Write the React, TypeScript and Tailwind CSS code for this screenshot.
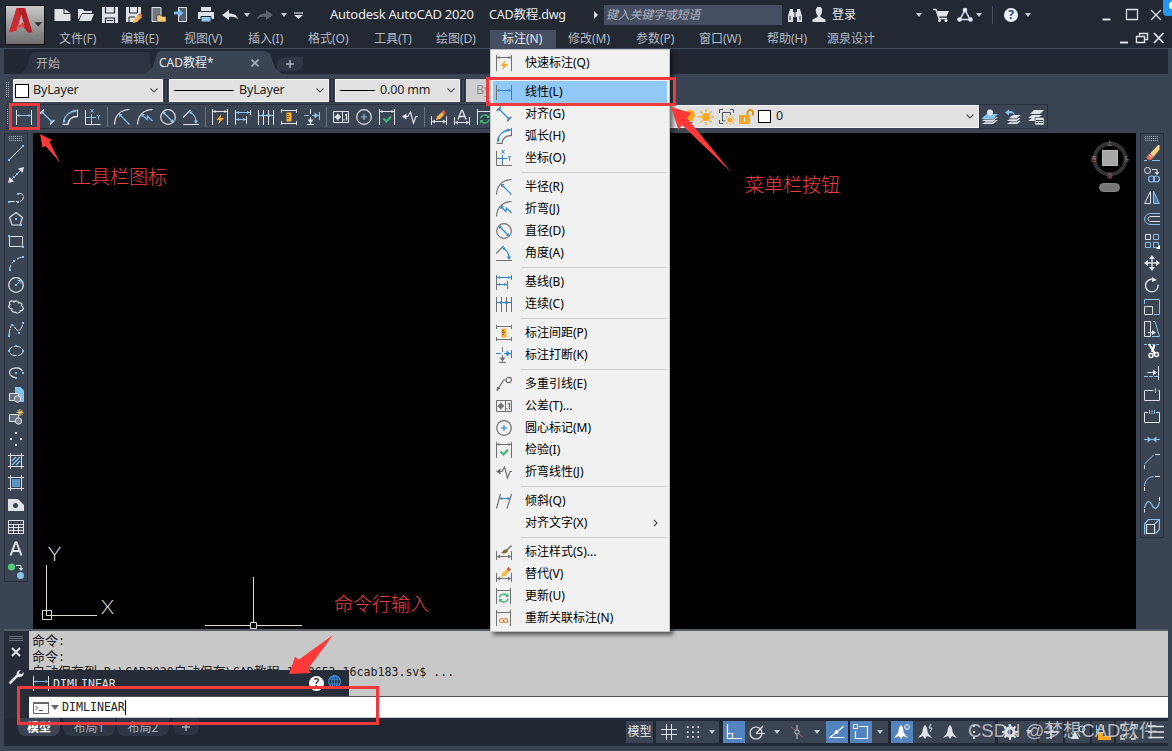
import type { ReactNode } from 'react';

type Draw = (m: string, a: string) => ReactNode;

const BLUE = '#86c2ee';
const LIGHT = '#dfe3e8';

/* Shared dimension glyphs. m = main stroke, a = accent stroke. */
const dim: Record<string, Draw> = {
  quick: (m) => (
    <>
      <path d="M.5 0v16M15.500 0v16M1 2.500h14" stroke={m} />
      <path d="M3.500 1v3L1 2.500zM12.500 1v3L15 2.500z" fill={m} />
      <path d="M9.500 5 4.500 11h3L6 15.500l6-6.500H8.500z" fill="#f9a72b" />
    </>
  ),
  linear: (m, a) => (
    <>
      <path d="M.5 1v15M15.500 1v15" stroke={m} />
      <path d="M1 6.500h14" stroke={a} />
      <path d="M1 6.500 3.500 5v3zM15 6.500 12.500 5v3z" fill={a} />
    </>
  ),
  aligned: (m, a) => (
    <>
      <path d="M.5 5 5 .5M11 15.500l4.500-4.500" stroke={m} strokeWidth="1.200" />
      <path d="m3 3 10 10" stroke={a} strokeWidth="1.3" />
      <path d="M2.500 2.500h3l-3 3zM13.500 13.500h-3l3-3z" fill={a} />
    </>
  ),
  arc: (m, a) => (
    <>
      <path d="M.5 15.500H6C6.500 10 10 7.500 15.500 7.500" stroke={m} strokeWidth="1.300" />
      <path d="M15.500 0v8" stroke={m} />
      <path d="M1.500 13C2.500 7 7 2.500 14 2" stroke={a} strokeWidth="1.300" />
      <path d="m1 14.500.5-4 2.500 1.500zM15.500 1.500l-4-1v3z" fill={a} />
    </>
  ),
  ordinate: (m, a) => (
    <>
      <path d="M.5 1v14.500H16M6.500 5v10.500" stroke={m} />
      <path d="M1 8.500h10M6.500 5v7M5.500 0l3 3.500M8.500 0l-3 3.500M12 6l1.500 2L15 6M13.500 8v2.500" stroke={a} />
    </>
  ),
  radius: (m, a) => (
    <>
      <path d="M.5 15.500C1 7 6 1 15.500.5" stroke={m} strokeWidth="1.200" />
      <path d="m6 6 9.500 9.500" stroke={a} strokeWidth="1.200" />
      <path d="M5 5h3.500L5 8.500z" fill={a} />
    </>
  ),
  jogged: (m, a) => (
    <>
      <path d="M.5 15.500C1 7 6 1 15.500.5" stroke={m} strokeWidth="1.200" />
      <path d="m5.500 6 4.500 4.500.5-3.500 5 5" stroke={a} strokeWidth="1.200" />
      <path d="M4.500 5H8L4.500 8.500z" fill={a} />
    </>
  ),
  diameter: (m, a) => (
    <>
      <circle cx="8" cy="8" r="7.300" stroke={m} strokeWidth="1.200" />
      <path d="m3.500 3.500 9 9" stroke={a} strokeWidth="1.200" />
      <path d="M3 3h3L3 6zM13 13h-3l3-3z" fill={a} />
    </>
  ),
  angular: (m, a) => (
    <>
      <path d="M0 15.500h16M0 8.500l7.500-7.500" stroke={m} strokeWidth="1.100" />
      <path d="M7.500 3.500c4 2 5.500 5.500 5.500 10" stroke={a} strokeWidth="1.200" />
      <path d="m6 2.500 3.500 0-1.500 3zM13 15l-2-3.500h4z" fill={a} />
    </>
  ),
  baseline: (m, a) => (
    <>
      <path d="M.5 1v15M11.500 7v8M15.500 1v5" stroke={m} />
      <path d="M1 3.500h14M1 10.500h10" stroke={a} />
      <path d="m1 3.500 3-1.500v3zM15 3.500l-3-1.500v3zM1 10.500 4 9v3zM11 10.500 8 9v3z" fill={a} />
    </>
  ),
  continued: (m, a) => (
    <>
      <path d="M.5 1v15M5.500 1v15M10.500 1v15M15.500 1v15" stroke={m} />
      <path d="M1 6.500h14" stroke={a} strokeWidth="1.200" />
      <path d="m8 6.500 2-1.500v3zM3 6.500 5 5v3zM13 6.500 11 5v3z" fill={a} />
    </>
  ),
  spacing: (m) => (
    <>
      <path d="M.5 0v4M15.500 0v4M.5 12v4M15.500 12v4M1 1.500h14M1 14.500h14" stroke={m} />
      <path d="M5.500 3.500h5v9h-5z" fill="#f9b233" />
      <path d="M6 5.500h2M6 7.500h3M6 9.500h2" stroke="#8a5a10" />
    </>
  ),
  breakDim: (m, a) => (
    <>
      <path d="M6.500 0v5M6.500 8v7M3 15.500h7" stroke={m} />
      <path d="m6.500 14.500-3-4h6z" fill={m} />
      <path d="M0 6.500h5M8 6.500h7M15.500 3v8" stroke={a} strokeWidth="1.200" />
      <path d="m14.500 6.500-4-3v6z" fill={a} />
    </>
  ),
  leader: (m) => (
    <>
      <circle cx="12.700" cy="4" r="2.700" stroke={m} strokeWidth="1.200" />
      <path d="M10 4H7.500L2 13" stroke={m} strokeWidth="1.200" />
      <path d="m.5 15.500.5-5 3.500 2z" fill={m} />
    </>
  ),
  tolerance: (m) => (
    <>
      <path d="M.5 2.500h15v11H.5zM9.500 3v10" stroke={m} />
      <circle cx="4.800" cy="8" r="1.800" stroke={m} strokeWidth="1.300" />
      <path d="M4.800 4.500v7M1.500 8h6.500M11 11.500v-1.200M12 6l1.500-.5v6" stroke={m} strokeWidth="1.300" />
    </>
  ),
  center: (m, a) => (
    <>
      <circle cx="8" cy="8" r="7.300" stroke={m} strokeWidth="1.200" />
      <path d="M8 5v6M5 8h6" stroke={a} strokeWidth="1.200" />
    </>
  ),
  inspect: (m) => (
    <>
      <path d="M.5 0v16M15.500 0v16M1 2.500h14" stroke={m} />
      <path d="M3.500 1v3L1 2.500zM12.500 1v3L15 2.500z" fill={m} />
      <path d="m4.500 9.500 3 3 4.500-5" stroke="#3fb673" strokeWidth="2.200" />
    </>
  ),
  jogLine: (m) => (
    <>
      <path d="M2 7.500h4L8.500 3l3 11L14 7.500h2" stroke={m} strokeWidth="1.200" />
      <path d="m0 7.500 4.500-3v6z" fill={m} />
    </>
  ),
  oblique: (m, a) => (
    <>
      <path d="M.5 15.500 4.500 1M11 15.500l4.500-14.500" stroke={m} strokeWidth="1.200" />
      <path d="M4 5.500h10" stroke={a} />
      <path d="m3.500 5.500 2.500-1.500v3zM14 5.500 11.500 4v3z" fill={a} />
    </>
  ),
  style: (m) => (
    <>
      <path d="M.5 7v9M15.500 7v9M1 12.500h14" stroke={m} />
      <path d="m1 12.500 3-2v4zM15 12.500l-3-2v4z" fill={m} />
      <path d="M15.500 1.500 10 7" stroke={m} strokeWidth="1.500" />
      <path d="M10.500 5.500c-3-.5-3.500 2-5.500 3.500 3 1 6 .5 7-2z" fill="#7b6a35" />
    </>
  ),
  override: (m) => (
    <>
      <path d="M.5 7v9M15.500 7v9M1 12.500h14" stroke={m} />
      <path d="m1 12.500 3-2v4zM15 12.500l-3-2v4z" fill={m} />
      <path d="m5 11 1-3.500L11 3l2.500 2.500L9 10z" fill="#f7b84b" />
      <path d="m10.500 3 2-2L15 3.500l-2 2z" fill="#e35a4a" />
    </>
  ),
  textEdit: (m) => (
    <>
      <path d="M.5 8v8M15.500 8v8M1 13.500h14" stroke={m} />
      <path d="m1 13.500 3-2v4zM15 13.500l-3-2v4z" fill={m} />
      <path d="m4 10.500 3.500-9h1l3.500 9M5.500 7.500h5" stroke={m} strokeWidth="1.400" />
    </>
  ),
  update: (m) => (
    <>
      <path d="M.5 0v16M14.500 0v16M1 2.500h13" stroke={m} />
      <path d="M3.500 9.500c.5-4 6-4.500 8-1.500M12 10.500c-.5 4-6 4.500-8 1.500" stroke="#3fb673" strokeWidth="1.400" />
      <path d="M12.500 5.500v3.500H9zM3 14.500V11h3.500z" fill="#3fb673" />
    </>
  ),
  reassoc: (m) => (
    <>
      <path d="M.5 0v16M14.500 0v16M1 2.500h13" stroke={m} />
      <circle cx="5.500" cy="10.500" r="2" stroke="#e58246" strokeWidth="1.200" />
      <circle cx="9.700" cy="10.500" r="2" stroke="#e58246" strokeWidth="1.200" />
    </>
  ),
};

const dot = (x: number, y: number) => <rect x={x} y={y} width="2" height="2" fill={BLUE} />;

const drawTools: ReactNode[] = [
  <><path d="m1.500 14.500 13-13" stroke={LIGHT} />{dot(0, 14)}{dot(14, 0)}</>,
  <><path d="M2 14 14 2" stroke={LIGHT} /><path d="m0 16 1.500-6L6 14.500zM16 0l-1.500 6L10 1.500z" fill={LIGHT} />{dot(5, 9)}{dot(8, 6)}</>,
  <><path d="M1 12.500h9M10 4.500c7-1.500 7 7.500 1 8" stroke={LIGHT} strokeDasharray="6 1" />{dot(0, 12)}{dot(9, 12)}{dot(9, 4)}</>,
  <><path d="m8 1.500 6.500 5-2.500 7.500H4L1.500 6.500z" stroke={LIGHT} strokeWidth="1.200" />{dot(7, 7)}{dot(12, 13)}</>,
  <><path d="M1.500 3.500h13v10h-13z" stroke={LIGHT} />{dot(0, 2)}{dot(14, 13)}</>,
  <><path d="M1.500 15C2 9 7 3 15 2" stroke={LIGHT} strokeDasharray="5 2" />{dot(1, 14)}{dot(5, 5)}{dot(14, 1)}</>,
  <><circle cx="8" cy="8" r="7.300" stroke={LIGHT} strokeWidth="1.200" /><path d="m8 8 4.500-4.500M9.500 3.500h3.500V7" stroke={BLUE} />{dot(7, 7)}</>,
  <path d="M4 10C1 10-.5 7 2 5.500 0 2.500 4 .5 6 3c2-2 4-1 4.500 1 3-1 4 1.500 3 3 3 1.500 2 5-1 4.500.5 2-4 3.500-5.500 1.500-2 .5-4-1-3-3z" stroke={LIGHT} strokeWidth="1.200" />,
  <><path d="M1 14C2 6 4 1 6 5s6 9 9-3" stroke={LIGHT} strokeDasharray="6 1" />{dot(0, 14)}{dot(3, 3)}{dot(10, 11)}{dot(14, 1)}</>,
  <><ellipse cx="8" cy="8" rx="7" ry="4.700" stroke={LIGHT} strokeDasharray="7 1.500" />{dot(0, 7)}{dot(14, 7)}{dot(7, 2)}</>,
  <><path d="M14.500 6C11 .5 1 3 1.500 8c.5 3 4 4.500 6 4.500" stroke={LIGHT} strokeWidth="1.200" />{dot(14, 7)}{dot(7, 7)}{dot(7, 12)}</>,
  <><path d="M7 0h5.500l3.500 3.500V15H7z" fill={BLUE} /><path d="M1.500 6.500h9v7h-9z" fill="#66707e" stroke={LIGHT} /><circle cx="9.500" cy="12" r="3.200" fill="#7d8692" stroke={LIGHT} /></>,
  <><path d="M1.500 5.500h9v7h-9z" fill="#66707e" stroke={LIGHT} /><circle cx="10.500" cy="12" r="3.200" fill="#7d8692" stroke={LIGHT} /><path d="M12 0v7M8.500 3.500h7M9.500 1l5 5M14.500 1l-5 5" stroke="#f7cf6b" /></>,
  <path d="M7 1h2v2H7zM2 7h2v2H2zM12 7h2v2h-2zM7 13h2v2H7z" fill={LIGHT} />,
  <><path d="M2.500 0v16M13.500 0v16M0 2.500h16M0 13.500h16" stroke={LIGHT} /><path d="m4 8 4-4M4 12l8-8M8 12l4-4" stroke={BLUE} strokeWidth="1.400" /></>,
  <><path d="M4 4h8v8H4z" fill="#5e93c5" /><path d="M2.500 0v16M13.500 0v16M0 2.500h16M0 13.500h16" stroke={LIGHT} /></>,
  <><path d="M0 2h10l6 6v6H0z" fill={LIGHT} /><circle cx="7.500" cy="8.500" r="2.500" fill="#3b4453" /></>,
  <path d="M.5 1.500h15v13H.5zM0 5.500h16M0 8.500h16M0 11.500h16M5.500 5v9M10.500 5v9" stroke={LIGHT} />,
  <path d="m2.500 14.500 5-13h1l5 13M4.500 10h7" stroke={LIGHT} strokeWidth="2" />,
  <><circle cx="3.500" cy="4" r="3.500" fill="#50cf7d" /><circle cx="12.500" cy="12.500" r="3.500" fill={BLUE} /><path d="M8 2.500h5v4" stroke={LIGHT} /><path d="M10.500 5h5L13 8z" fill={LIGHT} /></>,
];

const editTools: ReactNode[] = [
  <><path d="M0 15.500h3M8 15.500h8" stroke={BLUE} /><path d="M15.500 0v4.500L9.500 12 6 8.500 14 0z" fill="#f6cf82" /><path d="m6 8.500 3.500 3.500L7 15C4 15.500 2 13.500 2.500 12z" fill="#ef6a5f" /><path d="m5 9.500 3.500 3.500" stroke="#fff" /></>,
  <><circle cx="3.500" cy="3.500" r="3" stroke={LIGHT} /><circle cx="7.500" cy="12" r="3" stroke={BLUE} strokeWidth="1.200" /><circle cx="12.500" cy="12" r="3" stroke={BLUE} strokeWidth="1.200" /><path d="M8 2.500h5v4" stroke={LIGHT} /><path d="M10.500 5h5L13 8z" fill={LIGHT} /></>,
  <><path d="M6.500 2v12.500H.7z" stroke={LIGHT} /><path d="M9.500 2v12.500h5.800z" stroke={BLUE} fill="#4b7cab" /></>,
  <><path d="M16 2.500H7C-1.500 2.500-1.500 13.500 7 13.500h9" stroke={BLUE} /><path d="M16 5.500H7c-4 0-4 5 0 5h9" stroke={LIGHT} /></>,
  <><path d="M1.500 1.500h5v5h-5z" stroke={LIGHT} /><path d="M9.500 1.500h5v5h-5zM1.500 9.500h5v5h-5zM9.500 9.500h5v5h-5z" stroke={BLUE} /><path d="M16 12v4h-4z" fill="#fff" /></>,
  <><path d="M8 2v12M2 8h12" stroke={LIGHT} strokeWidth="1.400" /><path d="M8 0 5 4h6zM8 16l-3-4h6zM0 8l4-3v6zM16 8l-4-3v6z" fill={LIGHT} /></>,
  <><path d="M9.500 2.500A6.300 6.300 0 1 0 14 7.500" stroke={LIGHT} strokeWidth="1.400" /><path d="M8 0v5l5-2z" fill={LIGHT} /></>,
  <><path d="M.5 5V.5h15v15H10" stroke={BLUE} /><path d="M.5 7.500h8v8h-8z" stroke={LIGHT} /></>,
  <><path d="M.5.5h6v15h-6z" stroke={LIGHT} /><path d="M9 .5h2l4.500 15H8" stroke={BLUE} /><path d="M4 11.500h5" stroke={LIGHT} /><path d="M8 9v5l4-2.500z" fill={LIGHT} /></>,
  <><path d="M0 1.500h16" stroke={BLUE} strokeDasharray="3 1" /><path d="m5 1 6 10M10.500 2 8 9" stroke="#fff" strokeWidth="2.200" /><circle cx="7" cy="12.500" r="2" stroke="#fff" strokeWidth="1.400" /><circle cx="12.500" cy="11.500" r="2" stroke="#fff" strokeWidth="1.400" /></>,
  <><path d="M14.500 1v14" stroke={LIGHT} /><path d="M0 11.500h14" stroke={BLUE} strokeDasharray="4 1" /><path d="M3 7.500h8" stroke={LIGHT} /><path d="m9 4.500 4 3-4 3z" fill={LIGHT} /></>,
  <><path d="M9.500 3.500H.5v10h15v-10H14" stroke={LIGHT} /><path d="M11.500 1v5" stroke={BLUE} /></>,
  <><path d="M4 3.500H.5v10h15v-10H12" stroke={LIGHT} /><path d="M5.500 1v5M10.500 1v5M8 1v5" stroke={BLUE} strokeDasharray="4 1" /></>,
  <><path d="M0 8.500h16" stroke={BLUE} /><path d="m7.500 8.500-4-3v6zM8.500 8.500l4-3v6z" fill={BLUE} /></>,
  <><path d="M.5 16v-4M11 1.500h5" stroke={LIGHT} /><path d="m.5 11 9-9" stroke={BLUE} /></>,
  <><path d="M.5 16v-4M11 1.500h5" stroke={LIGHT} /><path d="M.5 11c.5-6 4-9 9-9.500" stroke={BLUE} /></>,
  <><path d="M.5 15.500V12M15.500 0v4" stroke={LIGHT} /><path d="M.5 11C3 2 6 4 8 8s5 6 7.500-3" stroke={BLUE} strokeWidth="1.200" /></>,
  <><path d="M2.500 5.500h8v9h-8z" stroke={LIGHT} strokeWidth="1.200" /><path d="m.5 5 4-4.500h11v10l-4 4M10.500 5l5-4.500M.5 5v10.500" stroke={BLUE} strokeWidth="1.200" /></>,
];

function Icon({ children, className = 'h-4 w-4' }: { children: ReactNode; className?: string }) {
  return (
    <svg viewBox="0 0 16 16" fill="none" className={`block shrink-0 ${className}`}>
      {children}
    </svg>
  );
}

function Caret({ className = '' }: { className?: string }) {
  return (
    <svg viewBox="0 0 6 4" className={`block h-1 w-1.5 shrink-0 ${className}`}>
      <path d="M0 0h6L3 4z" fill="#c9ced6" />
    </svg>
  );
}

function Chevron() {
  return (
    <svg viewBox="0 0 8 5" fill="none" className="block h-[5px] w-2 shrink-0">
      <path d="m.5.500 3.500 3.500L7.500.500" stroke="#555" strokeWidth="1.100" />
    </svg>
  );
}

/* Dotted drag handles for the dockable bars. */
function GripX({ className = '' }: { className?: string }) {
  return (
    <svg viewBox="0 0 14 5" className={`block h-[5px] w-[14px] shrink-0 ${className}`}>
      <path d="M0 .5h14M0 2.500h14M0 4.500h14" stroke="#aab1bb" strokeDasharray="1 1" />
    </svg>
  );
}

function GripY({ className = '' }: { className?: string }) {
  return (
    <svg viewBox="0 0 4 16" className={`block h-4 w-1 shrink-0 ${className}`}>
      <path d="M.5 0v16M2.500 0v16" stroke="#aab1bb" strokeDasharray="1 1" />
    </svg>
  );
}

const menus = [
  { label: '文件(F)', w: 'w-[62px]' },
  { label: '编辑(E)', w: 'w-[63px]' },
  { label: '视图(V)', w: 'w-[64px]' },
  { label: '插入(I)', w: 'w-[60px]' },
  { label: '格式(O)', w: 'w-[66px]' },
  { label: '工具(T)', w: 'w-[62px]' },
  { label: '绘图(D)', w: 'w-[54px]' },
  { label: '标注(N)', w: 'w-[66px]', open: true },
  { label: '修改(M)', w: 'w-[80px]' },
  { label: '参数(P)', w: 'w-[63px]' },
  { label: '窗口(W)', w: 'w-[68px]' },
  { label: '帮助(H)', w: 'w-[60px]' },
  { label: '源泉设计', w: 'w-[60px]' },
];

const dimMenu: [string, string][][] = [
  [['quick', '快速标注(Q)']],
  [['linear', '线性(L)'], ['aligned', '对齐(G)'], ['arc', '弧长(H)'], ['ordinate', '坐标(O)']],
  [['radius', '半径(R)'], ['jogged', '折弯(J)'], ['diameter', '直径(D)'], ['angular', '角度(A)']],
  [['baseline', '基线(B)'], ['continued', '连续(C)']],
  [['spacing', '标注间距(P)'], ['breakDim', '标注打断(K)']],
  [['leader', '多重引线(E)'], ['tolerance', '公差(T)...'], ['center', '圆心标记(M)'], ['inspect', '检验(I)'], ['jogLine', '折弯线性(J)']],
  [['oblique', '倾斜(Q)'], ['', '对齐文字(X)']],
  [['style', '标注样式(S)...'], ['override', '替代(V)'], ['update', '更新(U)'], ['reassoc', '重新关联标注(N)']],
];

const toolGroups = [
  ['linear', 'aligned', 'arc', 'ordinate'],
  ['radius', 'jogged', 'diameter', 'angular'],
  ['quick', 'baseline', 'continued', 'spacing', 'breakDim'],
  ['tolerance', 'center', 'inspect', 'jogLine'],
  ['override', 'textEdit', 'update'],
];

function DimensionMenu() {
  return (
    <div className="absolute left-0 top-[19px] z-20 w-[180px] border border-[#c4c4c4] bg-[#f1f1f1] px-0.5 pb-0.5 pt-0.5 text-black shadow-[3px_3px_4px_rgba(0,0,0,0.55)]">
      {dimMenu.map((group, g) => (
        <div key={g}>
          {g > 0 && <div className="ml-7 h-[7px] pt-[3px]"><div className="h-px bg-[#cfcfcf]" /></div>}
          {group.map(([icon, label]) => (
            <div
              key={label}
              className={`flex h-[22px] items-center pl-[3px] ${icon === 'linear' ? 'bg-[#90c8f6]' : ''}`}
            >
              <div className="w-[29px]">{icon && <Icon>{dim[icon]('#707070', '#2f86cc')}</Icon>}</div>
              <span className="flex-1 text-[12px] leading-none">{label}</span>
              {!icon && (
                <svg viewBox="0 0 6 10" fill="none" className="mr-[9px] h-2 w-[5px]">
                  <path d="m1 1 4 4-4 4" stroke="#333" strokeWidth="1.300" />
                </svg>
              )}
            </div>
          ))}
        </div>
      ))}
    </div>
  );
}

function QuickAccess() {
  return (
    <div className="flex w-[271px] items-center text-[#dfe3e8]">
      <Icon className="mr-[7px] h-4 w-[17px]"><path d="M0 2h9v5h7v7H0z" fill={LIGHT} /><path d="M10 2l6 4h-6z" fill={LIGHT} /></Icon>
      <Icon className="mr-2 h-4 w-4"><path d="M0 13V2h5l1 2h8v2H4z" fill={LIGHT} /><path d="M4 7h12l-3 7H1z" fill={LIGHT} /></Icon>
      <Icon className="mr-2 h-4 w-4"><path d="M0 0h16v16H0z" fill={LIGHT} /><path d="M3.500 0v6h9V0M3.500 16v-5h9v5" stroke="#222933" strokeWidth="1.200" /><path d="M5 13.500h6" stroke="#222933" /></Icon>
      <Icon className="mr-2 h-4 w-4"><path d="M0 0h15v8l-8 7H0z" fill={LIGHT} /><path d="M3.500 0v6h8V0M3 15v-5h6" stroke="#222933" /><path d="m7 16 1-4 5-5 3 3-5 5z" fill="#f4b562" /><path d="m12 8 2-2 2.500 2.500-2 2z" fill="#e07b52" /></Icon>
      <Icon className="mr-2 h-4 w-4"><path d="M2 .5h9v14H2z" fill="#6f7781" stroke={LIGHT} /><path d="M7 8h4l1 1.500h4V15H7z" fill="#f8ca78" stroke="#222933" strokeWidth=".5" /></Icon>
      <Icon className="mr-2 h-4 w-4"><path d="M4.500.5h8v14h-8z" fill="#56606d" stroke={LIGHT} /><path d="M0 4.500h5V2l4.500 4L5 10V7.500H0z" fill="#74b9ed" /></Icon>
      <Icon className="mr-2 h-4 w-4"><path d="M3 0h10v4H3zM0 5h16v7H0z" fill={LIGHT} /><path d="M3 9.500h10V15H3z" fill="#8fcbf5" stroke="#222933" /></Icon>
      <Icon className="mr-[6px] h-4 w-4"><path d="m0 8 7-5v3.500c5 0 8 1.500 9 6-2.500-2.500-5-3-9-2.500V13z" fill={LIGHT} /></Icon>
      <Caret className="mr-[7px]" />
      <Icon className="mr-[8px] h-4 w-4"><path d="M16 8 9 3v3.500c-5 0-8 1.500-9 6C2.500 10 5 9.500 9 10v3z" fill="#5c6470" /></Icon>
      <Caret className="mr-[7px]" />
      <Icon className="h-4 w-[9px]"><path d="M0 4.500h16" stroke={LIGHT} strokeWidth="2" /><path d="M0 8h16l-8 7z" fill={LIGHT} /></Icon>
    </div>
  );
}

function Header() {
  return (
    <header className="flex h-12 bg-[#222933]">
      <div className="ml-[5px] mt-[5px] h-10 w-10 border border-[#111] bg-linear-to-b from-[#c9c9c9] to-[#6f6f6f]">
        <svg viewBox="0 0 40 40" className="h-full w-full">
          <path d="m3 28 8-26h9l-3 5-6 19z" fill="#cb2a30" />
          <path d="M13 2h7l8 26h-5l-4-5z" fill="#b32026" />
          <path d="m16 9 3 10-6 3z" fill="#b4b4b4" />
          <path d="m3 28 15-11 2 5-9 1z" fill="#e0474a" />
          <path d="M30 17h8l-4 4.500z" fill="#2c2c2c" />
        </svg>
      </div>
      <div className="flex flex-1 flex-col">
        <div className="flex h-[30px] items-center pl-[9px]">
          <QuickAccess />
          <span className="ml-[5px] w-[159px] whitespace-nowrap text-[13px] tracking-[-0.250px] text-[#e6e9ed]">Autodesk AutoCAD 2020</span>
          <span className="w-[105px] whitespace-nowrap text-[12.500px] tracking-[-0.200px] text-[#e6e9ed]">CAD教程.dwg</span>
          <svg viewBox="0 0 4 8" className="h-2 w-1"><path d="m0 0 4 4-4 4z" fill="#d9dde3" /></svg>
          <div className="ml-[6px] flex h-5 w-[178px] items-center bg-[#464f62] pb-px pl-[2px] text-[12px] italic tracking-[-0.250px] text-[#aeb5c0]">键入关键字或短语</div>
          <Icon className="ml-[5px] h-4 w-4"><path d="M3 2h3v3h4V2h3l2 7v6h-5v-5H6v5H1V9z" fill={LIGHT} /><path d="M3 9v4M8 5v5M13 9v4" stroke="#222933" /></Icon>
          <Icon className="ml-2 h-4 w-4"><path d="M8 0c3 0 3.500 2 3 5-.3 2-1 3-1.500 3.500V10l5 2.500V15h-13v-2.500l5-2.500V8.500C6 8 5.300 7 5 5c-.5-3 0-5 3-5z" fill={LIGHT} /></Icon>
          <span className="ml-[5px] w-[84px] text-[12px] text-[#e6e9ed]">登录</span>
          <Caret />
          <Icon className="ml-[11px] h-4 w-4"><path d="M0 2.500h3l3 9h8" stroke={LIGHT} strokeWidth="1.400" /><path d="M4 4h12l-2.500 5.500H5.500z" fill={LIGHT} /><circle cx="6.500" cy="13.500" r="1.500" fill={LIGHT} /><circle cx="13" cy="13.500" r="1.500" fill={LIGHT} /></Icon>
          <Icon className="ml-2 h-4 w-4"><path d="M8 3 3 12.500h10z" stroke="#cfdaf2" strokeWidth="1.600" /><circle cx="8" cy="3" r="2.300" fill="#e2e8f7" /><circle cx="2.500" cy="12.500" r="2.300" fill="#e2e8f7" /><circle cx="13.500" cy="12.500" r="2.300" fill="#e2e8f7" /></Icon>
          <Caret className="ml-[3px]" />
          <div className="ml-[10px] h-[18px] w-px bg-[#465062]" />
          <div className="ml-[11px] flex h-[14px] w-[14px] items-center justify-center rounded-full bg-[#eef3ff] text-[12px] font-bold leading-none text-[#28478c]">?</div>
          <Caret className="ml-[7px]" />
          <svg viewBox="0 0 64 14" fill="none" className="ml-[71px] h-[14px] w-16 shrink-0" stroke="#dfe3e8">
            <path d="M.5 11.500h8" strokeWidth="2" />
            <path d="M24.500 1.500h11v10h-11z" strokeWidth="1.300" />
            <path d="m49 2 10 10M59 2 49 12" strokeWidth="1.400" />
          </svg>
        </div>
        <nav className="flex h-[18px] pl-[14px] text-[12px] text-[#b5bac2]">
          {menus.map((m) =>
            m.open ? (
              <div key={m.label} className={`relative h-[18px] bg-[#464f62] pl-3 leading-[18px] text-[#e2e5ea] ${m.w}`}>
                {m.label}
                <DimensionMenu />
              </div>
            ) : (
              <div key={m.label} className={`whitespace-nowrap leading-[18px] ${m.w} ${m.label === '修改(M)' ? 'pl-3' : ''}`}>
                {m.label}
              </div>
            ),
          )}
          <svg viewBox="0 0 50 16" fill="none" className="ml-[232px] h-4 w-[50px] shrink-0" stroke="#dfe3e8">
            <path d="M1 12.500h8" strokeWidth="2" />
            <path d="M20.500 5.500V3.500h8v6H26M17.500 6.500h8v6h-8z" strokeWidth="1.400" />
            <path d="m35 3 9.500 10M44.500 3 35 13" strokeWidth="1.800" />
          </svg>
        </nav>
      </div>
    </header>
  );
}

function DocumentTabs() {
  return (
    <div className="mx-1 flex h-[25px] items-end bg-[#222833] pl-4 text-[12px]">
      <div className="flex h-[22px] w-[132px] items-center bg-[#2c3441] pl-4 pt-px text-[#aab0ba] [clip-path:polygon(0_100%,5%_70%,8%_10%,10%_0,98%_0,100%_100%)]">开始</div>
      <div className="-ml-[6px] flex h-[23px] w-[136px] items-center bg-[#3b4453] pl-[13px] pt-px text-[#e4e7eb] [clip-path:polygon(0_100%,5%_70%,8%_10%,10%_0,87%_0,91%_10%,95%_75%,100%_100%)]">
        <span className="w-[92px]">CAD教程*</span>
        <svg viewBox="0 0 8 8" className="h-2 w-2" fill="none"><path d="m.5.500 7 7M7.500.500l-7 7" stroke="#a9afb9" strokeWidth="1.600" /></svg>
      </div>
      <div className="mb-[3px] flex h-[14px] w-[26px] -translate-x-[5px] items-center justify-center rounded-br-lg rounded-tl-lg bg-[#2f3744]">
        <svg viewBox="0 0 8 8" className="h-2 w-2"><path d="M4 0v8M0 4h8" stroke="#a9afb9" strokeWidth="1.600" /></svg>
      </div>
    </div>
  );
}

function PropertyBar() {
  const box = 'flex h-[23px] items-center border border-[#f4f4f4] bg-[#e1e1e1] pt-px text-[12.500px] tracking-[-0.150px] text-[#222]';
  return (
    <div className="flex h-[29px] items-center pl-[6px] pt-px">
      <GripY className="mr-[3px]" />
      <div className={`${box} w-[150px] pr-1`}>
        <div className="ml-px mr-1 h-[14px] w-[14px] border border-black bg-white" />
        <span className="flex-1">ByLayer</span>
        <Chevron />
      </div>
      <div className="mx-px h-[23px] w-1 border border-[#252c37]" />
      <div className={`${box} w-40 px-1`}>
        <div className="mr-[5px] h-px w-[60px] bg-black" />
        <span className="flex-1">ByLayer</span>
        <Chevron />
      </div>
      <div className="mx-px h-[23px] w-1 border border-[#252c37]" />
      <div className={`${box} w-[125px] px-1`}>
        <div className="mr-[5px] h-px w-[35px] bg-black" />
        <span className="flex-1">0.00 mm</span>
        <Chevron />
      </div>
      <div className="mx-px h-[23px] w-1 border border-[#252c37]" />
      <div className="flex h-[23px] w-[140px] items-center border border-[#ccc] bg-[#cfcfcf] pl-[9px] text-[12.500px] text-[#8b8b8b]">ByColor</div>
    </div>
  );
}

function DimensionToolbar() {
  return (
    <div className="flex h-[25px] items-center pl-[6px]">
      <div className="flex h-[25px] w-[496px] items-center border border-[#2a313d]">
        <GripY className="mr-[5px]" />
        {toolGroups.map((group, g) => (
          <div key={g} className="flex items-center">
            {g > 0 && <div className="ml-[6px] mr-[6px] h-5 w-px bg-[#697281]" />}
            <div className="flex gap-[7px]">
              {group.map((name) => (
                <Icon key={name}>{dim[name](LIGHT, BLUE)}</Icon>
              ))}
            </div>
          </div>
        ))}
      </div>
      <div className="ml-[148px] flex h-[23px] w-[329px] items-center border border-[#f4f4f4] bg-[#e1e1e1] pl-[24px] pr-1 text-[12.500px] text-[#222]">
        <Icon className="ml-[7px] h-4 w-4"><path d="M8 1a5 5 0 0 0-3 9v2h6v-2a5 5 0 0 0-3-9z" fill="#f9a825" /><path d="M5.500 13.500h5M6.500 15.500h3" stroke="#4d5765" /></Icon>
        <Icon className="h-4 w-4"><circle cx="8" cy="8" r="4" fill="#f9a825" /><path d="M8 0v3M8 13v3M0 8h3M13 8h3M2.500 2.500l2 2M11.500 11.500l2 2M13.500 2.500l-2 2M4.500 11.500l-2 2" stroke="#f9a825" strokeWidth="1.300" /></Icon>
        <Icon className="ml-[5px] h-4 w-4"><path d="M.5 4V.5H4M11 .5h3.500V4M.5 11v3.500H4M3.500 8V3.500h8V6M3.500 8v4H6" stroke="#4d5765" /><circle cx="11" cy="11" r="2.500" fill="#f9a825" /><path d="M11 6v1M11 15v1M6 11h1M15 11h1M7.500 7.500l1 1M13.500 13.500l1 1M14.500 7.500l-1 1M8.500 13.500l-1 1" stroke="#f9a825" strokeWidth="1.200" /></Icon>
        <Icon className="ml-[4px] h-4 w-4"><path d="M0 6h11v9H0z" fill="#f9a825" /><path d="M8.500 6V4c0-4 5.500-4 5.500 0v2.500" stroke="#dc9420" strokeWidth="2" /><path d="M5.500 8.500v4" stroke="#fff" /></Icon>
        <div className="ml-[3px] mr-[5px] h-[13px] w-[13px] border border-black bg-white" />
        <span className="flex-1">0</span>
        <Chevron />
      </div>
      <div className="flex h-[25px] w-[69px] items-center gap-[7px] border border-[#2a313d] pl-[2px]">
        <Icon><path d="m0 15 5-4h11l-5 4zM0 12l5-4h11l-5 4z" fill={LIGHT} /><path d="m0 9 5-4h11l-5 5H0z" fill={BLUE} /><circle cx="8" cy="3.500" r="3" fill={LIGHT} /><path d="m0 13 11 0 5-4M0 10.500h11l5-4" stroke="#3b4453" strokeWidth=".6" /></Icon>
        <Icon><path d="m2 15 4-3h10l-4 3zM2 12l4-3h10l-4 3zM4 9l4-3h8l-4 3z" fill={LIGHT} /><path d="M2 12.800h10l4-3M3 9.800h9l4-3" stroke="#3b4453" strokeWidth=".8" /><path d="m0 3.500 4-3V2c4 0 5 1 6 4-2-1.500-3-2-6-1.500v2z" fill={BLUE} /></Icon>
        <Icon><path d="m0 12 4-3h7l-4 3zM0 9l4-3h10l-4 3zM2 5l4-4h10l-4 4z" fill={LIGHT} /><path d="M7 8.500h9V16H7z" fill={LIGHT} stroke="#3b4453" strokeWidth=".6" /><path d="M8 11.500h7M8 13.500h2M11 13.500h4" stroke="#3b4453" /></Icon>
      </div>
    </div>
  );
}

function ToolColumn({ tools, className }: { tools: ReactNode[]; className: string }) {
  return (
    <div className={`flex flex-col items-center gap-[6px] border border-[#2a313d] pb-[2px] ${className}`}>
      <GripX className="mb-[-2px] mt-[2px]" />
      {tools.map((t, i) => (
        <Icon key={i}>{t}</Icon>
      ))}
    </div>
  );
}

/* Drawing area with UCS icon, crosshair and view cube. */
function Canvas() {
  return (
    <div className="relative w-[1103px] bg-black">
      <svg className="absolute inset-0 h-full w-full" fill="none" stroke="#dcdccb" viewBox="0 0 1103 496">
        <path d="M9.500 477.500h9v9h-9zM13.500 432v50.500H64" />
        <path d="M220.500 444v45M220.500 495v1M172 492.500h45M223 492.500h46M217.500 489.500h6v6h-6z" />
        <circle cx="1077" cy="26" r="15.500" stroke="#343434" strokeWidth="4" />
        <path d="M1069.500 17.500h15v15h-15z" fill="#a6a6a6" stroke="#b8b8b8" />
        <rect x="1066.500" y="50.500" width="20" height="8" rx="4" fill="#777" stroke="#858585" />
        <g fill="#e4e4d8" stroke="none" fontFamily="Lato, sans-serif" fontWeight="300">
          <text x="15" y="428" fontSize="19" textLength="13" lengthAdjust="spacingAndGlyphs">Y</text>
          <text x="68" y="481" fontSize="19" textLength="13" lengthAdjust="spacingAndGlyphs">X</text>
        </g>
        <g fill="#909090" stroke="none" fontFamily="Noto Sans CJK SC, sans-serif" fontSize="5.500">
          <text x="1074" y="12">上</text>
          <text x="1058" y="28">西</text>
          <text x="1091" y="28">东</text>
          <text x="1074" y="45">南</text>
        </g>
      </svg>
    </div>
  );
}

function CommandWindow() {
  const mono = "font-['DejaVu_Sans_Mono','Noto_Sans_CJK_SC',monospace]";
  return (
    <div className={`mx-1 flex h-[87px] bg-[#262d38] ${mono} text-[11.600px] text-[#1c1c1c]`}>
      <div className="flex w-[25px] flex-col items-center">
        <GripX className="mt-[5px] w-[17px]" />
        <svg viewBox="0 0 10 10" className="mt-[6px] h-[10px] w-[10px] -translate-x-px"><path d="m1 1 8 8M9 1 1 9" stroke="#dfe3e8" strokeWidth="2" /></svg>
        <Icon className="mt-[12px] h-4 w-4 -translate-x-px"><path d="m1.500 14.500 8-8" stroke={LIGHT} strokeWidth="2.500" /><path d="M9 7C7.500 3.500 10 .5 13 1l-2 2 .5 2L14 5l1.500-2c1 3.500-2 6-5 5z" fill={LIGHT} /></Icon>
      </div>
      <div className="relative flex flex-1 flex-col bg-[#c8c8c8]">
        <div className="h-[65px] pl-[3px] pt-[2px] leading-[15.500px]">
          <div className="h-[15.500px]"><span className="text-[13px]">命令</span>:</div>
          <div className="h-[15.500px]"><span className="text-[13px]">命令</span>:</div>
          <div className="h-[15.500px] whitespace-pre">
            <span className="text-[13px]">自动保存到</span> D:\CAD2020<span className="text-[13px]">自动保存</span>\CAD<span className="text-[13px]">教程</span>_1_19653_16cab183.sv$ ...
          </div>
        </div>
        <div className="flex h-[21px] items-center border-t border-[#555] bg-white pl-1 pt-px text-[#222]">
          <svg viewBox="0 0 16 12" fill="none" className="h-3 w-4"><path d="M.5.500h15v11H.5z" stroke="#666" /><path d="M.5 1h15" stroke="#666" strokeWidth="2" /><path d="m2.500 4 2 2-2 2M6 8.500h4" stroke="#555" /></svg>
          <svg viewBox="0 0 8 5" className="ml-[2px] mr-[3px] h-[5px] w-2"><path d="M0 0h8L4 5z" fill="#666" /></svg>
          <span className="pt-px">DIMLINEAR</span>
          <span className="h-[15px] w-px bg-black" />
        </div>
        <div className="absolute left-0 top-[39px] flex h-[26px] w-80 items-center bg-[#262d38] pl-1 text-[#dfe3e8]">
          <Icon>{dim.linear(LIGHT, '#6fb0f0')}</Icon>
          <span className="ml-1 flex-1 pt-1">DIMLINEAR</span>
          <div className="flex h-[15px] w-[15px] items-center justify-center rounded-full bg-white font-['Noto_Sans',sans-serif] text-[12px] font-semibold leading-none text-[#333]">?</div>
          <Icon className="ml-1 mr-[6px] h-[15px] w-[15px] -translate-y-px"><circle cx="7" cy="7" r="6.300" stroke="#3c8fdb" strokeWidth="1.200" /><ellipse cx="7" cy="7" rx="3" ry="6.300" stroke="#3c8fdb" strokeWidth="1.200" /><path d="M1 4.500h12M1 9.500h12M7 1v12" stroke="#3c8fdb" /></Icon>
        </div>
      </div>
    </div>
  );
}

const cell = 'flex h-[22px] items-center justify-center';

function StatusBar() {
  return (
    <div className="mx-1 flex h-[28px] bg-[#222833] text-[12px] text-[#aab0ba]">
      <div className="flex w-[622px] items-start pl-[14px]">
        <div className="flex h-[18px] w-[42px] items-end justify-center rounded-b-lg bg-[#3b4453] pb-[1px] font-bold leading-[14px] text-white">模型</div>
        <div className="ml-[3px] flex h-[18px] w-[52px] items-end justify-center rounded-b-lg bg-[#2f3744] pb-[1px] leading-[14px]">布局1</div>
        <div className="ml-[2px] flex h-[18px] w-[52px] items-end justify-center rounded-b-lg bg-[#2f3744] pb-[1px] leading-[14px]">布局2</div>
        <div className="ml-[4px] flex h-[17px] w-[26px] items-center justify-center rounded-b-lg bg-[#2c3441]">
          <svg viewBox="0 0 8 8" className="h-2 w-2"><path d="M4 0v8M0 4h8" stroke="#a9afb9" strokeWidth="1.500" /></svg>
        </div>
      </div>
      <div className="flex flex-1 pt-[3px]">
        <div className={`${cell} w-[27px] bg-[#3b4453] text-[#e6e9ed]`}>模型</div>
        <div className={`${cell} ml-[3px] w-[63px] gap-[9px] bg-[#3b4453]`}>
          <Icon><path d="M5.500 0v16M10.500 0v16M0 5.500h16M0 10.500h16" stroke={LIGHT} /></Icon>
          <Icon className="h-[14px] w-[14px]"><path d="M1 2.500h14M1 8h14M1 13.500h14" stroke={LIGHT} strokeWidth="2" strokeDasharray="2 4" /></Icon>
          <Caret />
        </div>
        <div className={`${cell} ml-[4px] w-[22px] bg-[#5484bf]`}>
          <Icon><path d="M1.500 0v14.500H16M2 9.500h4.500v5" stroke="#fff" strokeWidth="1.200" /></Icon>
        </div>
        <div className={`${cell} w-[81px] justify-start bg-[#3b4453] pl-1`}>
          <Icon><circle cx="7" cy="9" r="6" stroke={LIGHT} strokeWidth="1.200" /><path d="M7 9.500h9M7 9.500 14 2" stroke={LIGHT} strokeWidth="1.200" /></Icon>
          <Caret className="ml-[9px]" />
          <Icon className="ml-[10px] h-[14px] w-[14px]"><path d="M8 0v5M8 11v5M5.500 8a2.500 2.500 0 1 0 5 0 2.500 2.500 0 1 0-5 0" stroke={LIGHT} /><path d="m1 2 5 4M10 10l5 4" stroke="#b56b6b" /></Icon>
          <Caret className="ml-[10px]" />
        </div>
        <div className={`${cell} w-[22px] bg-[#5484bf]`}>
          <Icon><path d="M16 13.500H1L15 2" stroke="#fff" strokeWidth="1.200" /><circle cx="7.500" cy="8" r="2" fill="#fff" /></Icon>
        </div>
        <div className={`${cell} ml-[2px] w-[22px] bg-[#5484bf]`}>
          <Icon><path d="M6 2.500h8.500v12h-12V7" stroke="#fff" strokeWidth="1.200" /><path d="M.5.500h4v4h-4z" stroke="#fff" /></Icon>
        </div>
        <div className={`${cell} mr-[3px] w-[16px] bg-[#3b4453]`}><Caret /></div>
        <div className={`${cell} w-[22px] bg-[#5484bf]`}>
          <Icon><path d="M7 1c3 3 2 6 3 8l4 5-5-2-2 3-2-3-5 2 4-5c1-2 0-5 3-8z" fill="#fff" /><circle cx="13" cy="3" r="2.300" stroke="#fff" /></Icon>
        </div>
        <div className={`${cell} w-[82px] justify-start gap-[8px] bg-[#3b4453] pl-[5px]`}>
          <Icon><path d="M7 1c3 3 2 6 3 8l4 5-5-2-2 3-2-3-5 2 4-5c1-2 0-5 3-8z" fill={LIGHT} /><path d="m13 0-2 4h3l-2 4" stroke={LIGHT} /></Icon>
          <Icon><path d="M8 1c3 3 2 6 3 8l4 5-5-2-2 3-2-3-5 2 4-5c1-2 0-5 3-8z" fill={LIGHT} /></Icon>
          <Icon><path d="M7 1h2v2H7zM7 7h2v2H7zM7 13h2v2H7z" fill={LIGHT} /></Icon>
        </div>
        <div className={`${cell} ml-[3px] w-[39px] justify-start bg-[#3b4453] pl-1`}>
          <Icon><circle cx="8" cy="8" r="4" stroke={LIGHT} strokeWidth="3" /><path d="M8 0v3M8 13v3M0 8h3M13 8h3M2.500 2.500l2 2M11.500 11.500l2 2M13.500 2.500l-2 2M4.500 11.500l-2 2" stroke={LIGHT} strokeWidth="2" /></Icon>
          <Caret className="ml-2" />
        </div>
        <div className={`${cell} ml-[2px] w-[24px] bg-[#3b4453]`}><Icon><path d="M8 1v14M1 8h14" stroke={LIGHT} strokeWidth="1.500" /></Icon></div>
        <div className={`${cell} ml-[2px] w-[25px] bg-[#3b4453]`}><Icon><path d="m5 7 4 8H1z" fill={LIGHT} /><circle cx="12" cy="5" r="3" stroke={LIGHT} /></Icon></div>
        <div className={`${cell} ml-[2px] w-[22px] bg-[#3b4453]`}><Icon><path d="M1.500 1v8M1 5.500h7M8.500 1v8" stroke={BLUE} /><path d="M3 8h5v4h8v4H3z" fill="#f9a825" /></Icon></div>
        <div className={`${cell} ml-[2px] flex-1 gap-3 bg-[#3b4453]`}>
          <Icon><path d="M1 5V1h4M11 1h4v4M1 11v4h4M15 11v4h-4M10 6l3-3M6 10l-3 3" stroke={LIGHT} strokeWidth="1.300" /></Icon>
          <Icon><path d="M0 2.500h16M0 8h16M0 13.500h16" stroke={LIGHT} strokeWidth="1.600" /></Icon>
        </div>
      </div>
    </div>
  );
}

/* Red tutorial marks laid over the whole window. */
function Callouts() {
  const label = 'absolute whitespace-nowrap text-[19px] font-light leading-none text-[#f23c40]';
  return (
    <div className="pointer-events-none absolute inset-0 z-30">
      <div className="absolute left-[9px] top-[103px] h-[27px] w-[31px] border-[3px] border-[#ee3a3c]" />
      <div className="absolute left-[486px] top-[77px] h-[29px] w-[190px] border-[3px] border-[#ee3a3c]" />
      <div className="absolute left-[17px] top-[686px] h-[39px] w-[362px] border-[3px] border-[#ee3a3c]" />
      <svg className="absolute inset-0 h-full w-full" viewBox="0 0 1172 751" fill="#ff3838">
        <path d="m40 134 12 6-2.500 2 10.500 20.600L45.500 146l-3 1.500z" />
        <path d="m671 107 20 6-4 5 44 54-49-47-3.500 5z" />
        <path d="m289 674 6-17 4 2.500 34-24.500-25 34 3 4z" />
      </svg>
      <div className={`${label} left-[72px] top-[168px]`}>工具栏图标</div>
      <div className={`${label} left-[745px] top-[176px]`}>菜单栏按钮</div>
      <div className={`${label} left-[334px] top-[595px]`}>命令行输入</div>
      <div className="absolute left-[968px] top-[721px] whitespace-nowrap font-['Liberation_Sans','Noto_Sans_CJK_SC',sans-serif] text-[18.500px] leading-5 text-[#d4d7db]/80">
        CSDN @梦想CAD软件
      </div>
      <div className="absolute right-0 top-0 h-4 w-[9px] rounded-bl bg-[#2196f3]">
        <div className="absolute right-[-3px] top-[2px] h-[7px] w-[6px] rounded-full bg-white" />
      </div>
    </div>
  );
}

export default function App() {
  return (
    <div className="relative flex h-[751px] w-[1172px] flex-col overflow-hidden bg-[#3b4453] font-['Noto_Sans','Noto_Sans_CJK_SC',sans-serif]">
      <Header />
      <div className="h-px bg-[#454e5d]" />
      <DocumentTabs />
      <div className="flex h-[59px] flex-col pt-px">
        <PropertyBar />
        <DimensionToolbar />
      </div>
      <div className="flex h-[496px]">
        <div className="w-[33px] pl-1">
          <ToolColumn tools={drawTools} className="w-6" />
        </div>
        <Canvas />
        <div className="pl-[4px]">
          <ToolColumn tools={editTools} className="w-6" />
        </div>
      </div>
      <div className="mx-1 h-[2px] bg-[#555d6a]" />
      <CommandWindow />
      <StatusBar />
      <Callouts />
    </div>
  );
}
